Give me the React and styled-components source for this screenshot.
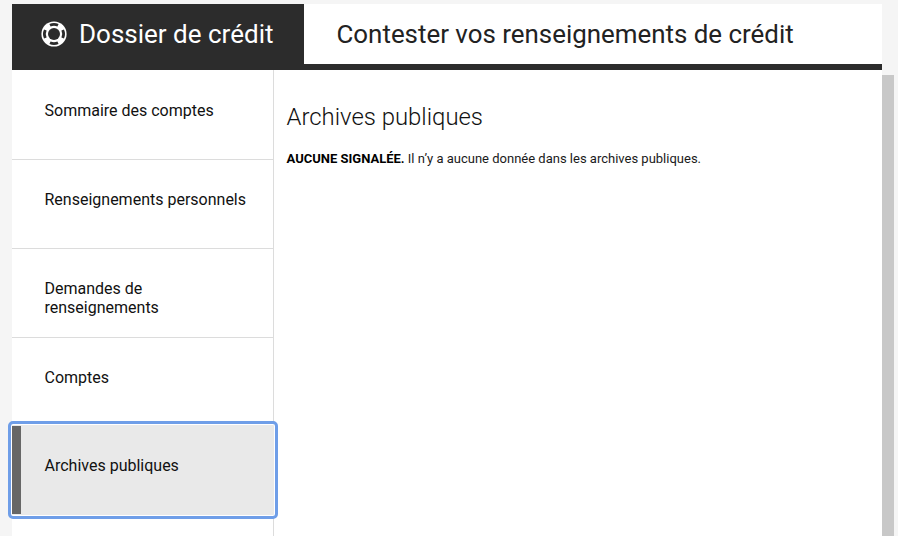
import React from 'react';
import styled, { createGlobalStyle } from 'styled-components';

const Global = createGlobalStyle`
  html, body { margin: 0; padding: 0; height: 100%; overflow: hidden; background: #f5f5f5; }
  body { font-family: Roboto, "Liberation Sans", sans-serif; color: #111; }
`;
const Page = styled.div`
  width: 898px; height: 536px; padding: 4px 0 0 12px; box-sizing: border-box;
  display: grid; grid-template-columns: 870px 12px; grid-template-rows: 66px 1fr; overflow: hidden;
`;
const Header = styled.header`
  grid-column: 1; grid-row: 1; display: flex; background: #fff;
  border-bottom: 6px solid #2c2c2c; box-sizing: border-box; height: 66px;
`;
const BrandTab = styled.div`
  width: 291.5px; background: #2c2c2c; color: #fff; display: flex; align-items: center;
  padding-left: 29px; gap: 12px; box-sizing: border-box; font-size: 26px;
`;
const PageTitle = styled.h1`
  margin: 0; padding-left: 33px; display: flex; align-items: center;
  font-size: 25.9px; font-weight: 400; color: #222;
`;
const Body = styled.div`
  grid-column: 1; grid-row: 2; background: #fff; display: grid; grid-template-columns: 262px 1fr;
`;
const Nav = styled.nav`
  border-right: 1px solid #dcdcdc; display: flex; flex-direction: column; box-sizing: border-box; width: 262px;
`;
const NavItem = styled.div`
  height: 89px; box-sizing: border-box; border-top: 1px solid #dcdcdc;
  padding: 30px 20px 0 32.5px; font-size: 16px; line-height: 19px; color: #111; flex: none;
  &:first-child { border-top-color: transparent; }
`;
const ActiveItem = styled.div`
  position: relative; flex: none; height: 90px; margin: -1px -1px 0 0; box-sizing: border-box;
  background: #e9e9e9; padding: 31px 20px 0 32.5px; font-size: 16px; line-height: 19px; color: #111;
  outline: 3px solid #6f9ee8; outline-offset: 1px; border-radius: 1px;
  box-shadow: 0 0 0 1px #fff;
  &::before {
    content: ''; position: absolute; left: 0; top: 1px; bottom: 1px; width: 8.5px; background: #666;
  }
`;
const Main = styled.main`
  padding: 31px 12.5px 0;
`;
const Heading = styled.h2`
  margin: 0; font-size: 23.9px; line-height: 32px; font-weight: 300; color: #111;
`;
const Notice = styled.p`
  margin: 17px 0 0; font-size: 13px; line-height: 18px; color: #1a1a1a;
  strong { font-weight: 700; color: #000; }
`;
const ScrollTrack = styled.div`
  grid-column: 2; grid-row: 1 / 3; padding-top: 71px; display: flex;
`;
const ScrollThumb = styled.div`
  width: 12px; background: #c8c8c8; flex: 1;
`;

const Lifebuoy = () => (
  <svg width="26" height="26" viewBox="0 0 26 26" aria-hidden="true">
    <circle cx="13" cy="13" r="12.6" fill="#fff" />
    <circle cx="13" cy="13" r="6" fill="#2c2c2c" />
    <g fill="none" stroke="#2c2c2c" strokeWidth="2.8">
      <path d="M9 4.3 A9.6 9.6 0 0 1 17 4.3" />
      <path d="M21.7 9 A9.6 9.6 0 0 1 21.7 17" />
      <path d="M17 21.7 A9.6 9.6 0 0 1 9 21.7" />
      <path d="M4.3 17 A9.6 9.6 0 0 1 4.3 9" />
    </g>
  </svg>
);

export default function App() {
  return (
    <Page>
      <Global />
      <Header>
        <BrandTab><Lifebuoy />Dossier de crédit</BrandTab>
        <PageTitle>Contester vos renseignements de crédit</PageTitle>
      </Header>
      <Body>
        <Nav>
          <NavItem>Sommaire des comptes</NavItem>
          <NavItem>Renseignements personnels</NavItem>
          <NavItem>Demandes de renseignements</NavItem>
          <NavItem>Comptes</NavItem>
          <ActiveItem>Archives publiques</ActiveItem>
        </Nav>
        <Main>
          <Heading>Archives publiques</Heading>
          <Notice><strong>AUCUNE SIGNALÉE.</strong> Il n’y a aucune donnée dans les archives publiques.</Notice>
        </Main>
      </Body>
      <ScrollTrack><ScrollThumb /></ScrollTrack>
    </Page>
  );
}
